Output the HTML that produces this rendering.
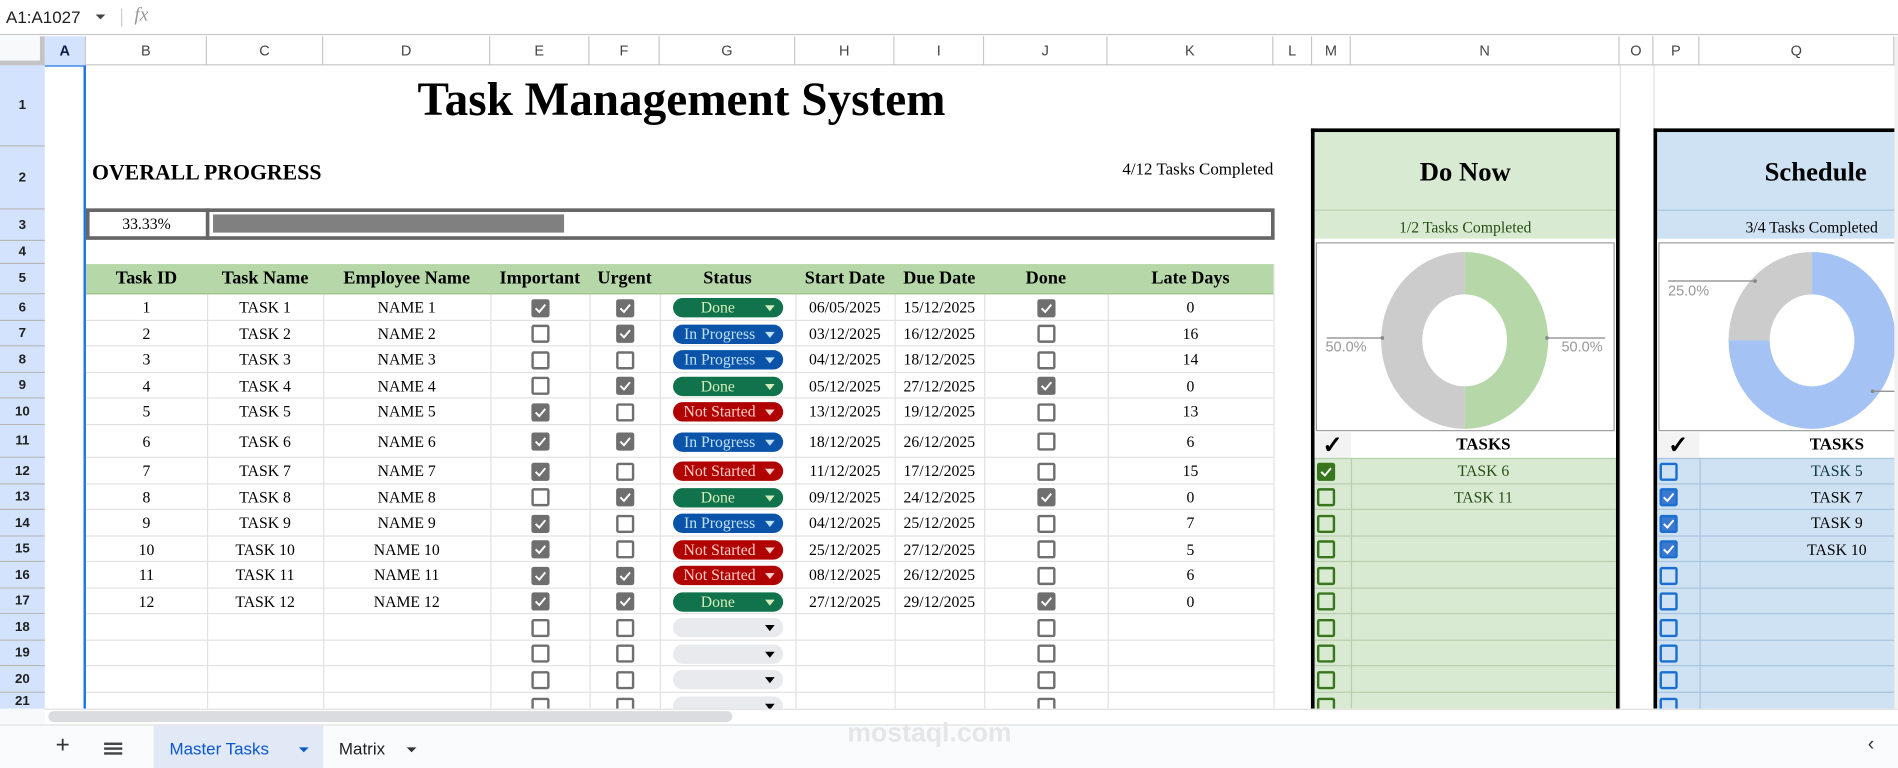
<!DOCTYPE html>
<html><head><meta charset="utf-8">
<style>
html,body{margin:0;padding:0;width:1898px;height:768px;overflow:hidden;background:#fff}
#w{position:absolute;left:0;top:0;width:1568px;height:634px;transform:scale(1.21046,1.21136);transform-origin:0 0;overflow:hidden;font-family:"Liberation Serif",serif;color:#000}
.a{position:absolute}
.hl{position:absolute;height:1px;background:#e2e2e2}
.vl{position:absolute;width:1px;background:#e2e2e2}
.r{position:absolute;left:0;width:1568px}
.c{position:absolute;top:0;bottom:0;display:flex;align-items:center;justify-content:center;font-size:13px;white-space:nowrap}
.B{left:71px;width:100px}.C{left:171px;width:96px}.D{left:267px;width:138px}.E{left:405px;width:82px}.F{left:487px;width:58px}.G{left:545px;width:112px}.H{left:657px;width:82px}.I{left:739px;width:74px}.J{left:813px;width:102px}.K{left:915px;width:137px}
.M{left:1086px;width:30px}.N{left:1116px;width:219px}.P{left:1369px;width:35px}.Q{left:1404px;width:161px}
.cb{width:15px;height:15px;box-sizing:border-box;border:2px solid #6f6f6f;border-radius:2px;display:block;position:relative}
.cb svg{position:absolute;left:-2px;top:-2px;width:15px;height:15px}
.k{background:#6f6f6f}
.g{border-color:#38761d}.gk{background:#38761d;border-color:#38761d}
.bl{border-color:#1a6fd0}.bk{background:#3b78d0;border-color:#1a6fd0}
.ch{width:91px;height:16px;border-radius:8px;color:#fff;font-size:13px;position:relative;display:flex;align-items:center;justify-content:center;padding-right:14px;box-sizing:border-box}
.ch:after{content:"";position:absolute;right:7px;top:6px;border-left:4px solid transparent;border-right:4px solid transparent;border-top:5px solid #fff}
.dn{background:#11734b;color:#d4edbc}.dn:after{border-top-color:#d4edbc}
.ip{background:#0a53a8;color:#bfe1f6}.ip:after{border-top-color:#bfe1f6}
.ns{background:#b10202;color:#ffcfc9}.ns:after{border-top-color:#ffcfc9}
.em{background:#e8eaed}.em:after{border-top-color:#000}
.ch.dn{padding-right:16px}
.ch.ns,.ch.ip{padding-right:13px}
.colh{position:absolute;top:30px;height:24px;display:flex;align-items:center;justify-content:center;font:12px "Liberation Sans",sans-serif;color:#444;border-right:1px solid #c7c7c7;box-sizing:border-box}
.rowh{position:absolute;left:0;width:37px;display:flex;align-items:center;justify-content:center;font:bold 11px "Liberation Sans",sans-serif;color:#1f1f1f;background:#d3e3fd;border-bottom:1px solid #b7b7b7;box-sizing:border-box}
</style></head><body><div id="w">

<!-- formula bar -->
<div class="a" style="left:0;top:0;width:1568px;height:29px;border-bottom:1px solid #c7c7c7;box-sizing:border-box"></div>
<div class="a" style="left:5px;top:6px;font:14px 'Liberation Sans',sans-serif;color:#1f1f1f">A1:A1027</div>
<div class="a" style="left:79px;top:12px;border-left:4px solid transparent;border-right:4px solid transparent;border-top:4px solid #444"></div>
<div class="a" style="left:100px;top:7px;width:1px;height:15px;background:#ccc"></div>
<div class="a" style="left:111px;top:4px;font:italic 16px 'Liberation Serif',serif;color:#999">fx</div>

<!-- column header -->
<div class="a" style="left:0;top:30px;width:37px;height:24px;background:#f8f9fa;border-right:4px solid #c4c4c4;border-bottom:4px solid #c4c4c4;box-sizing:border-box"></div>
<div class="a" style="left:37px;top:53px;width:1531px;height:1px;background:#c7c7c7"></div>
<div class="colh" style="left:37px;width:34px;background:#d3e3fd;color:#0b1d4f;font-weight:bold">A</div>
<div class="colh" style="left:71px;width:100px">B</div>
<div class="colh" style="left:171px;width:96px">C</div>
<div class="colh" style="left:267px;width:138px">D</div>
<div class="colh" style="left:405px;width:82px">E</div>
<div class="colh" style="left:487px;width:58px">F</div>
<div class="colh" style="left:545px;width:112px">G</div>
<div class="colh" style="left:657px;width:82px">H</div>
<div class="colh" style="left:739px;width:74px">I</div>
<div class="colh" style="left:813px;width:102px">J</div>
<div class="colh" style="left:915px;width:137px">K</div>
<div class="colh" style="left:1052px;width:32px">L</div>
<div class="colh" style="left:1084px;width:32px">M</div>
<div class="colh" style="left:1116px;width:222px">N</div>
<div class="colh" style="left:1338px;width:28px">O</div>
<div class="colh" style="left:1366px;width:38px">P</div>
<div class="colh" style="left:1404px;width:161px">Q</div>

<!-- row headers -->
<div class="rowh" style="top:54px;height:67px">1</div>
<div class="rowh" style="top:121px;height:52px">2</div>
<div class="rowh" style="top:173px;height:26px">3</div>
<div class="rowh" style="top:199px;height:19px">4</div>
<div class="rowh" style="top:218px;height:25px">5</div>
<div class="rowh" style="top:243px;height:22px">6</div>
<div class="rowh" style="top:265px;height:21px">7</div>
<div class="rowh" style="top:286px;height:22px">8</div>
<div class="rowh" style="top:308px;height:21px">9</div>
<div class="rowh" style="top:329px;height:22px">10</div>
<div class="rowh" style="top:351px;height:27px">11</div>
<div class="rowh" style="top:378px;height:22px">12</div>
<div class="rowh" style="top:400px;height:21px">13</div>
<div class="rowh" style="top:421px;height:22px">14</div>
<div class="rowh" style="top:443px;height:21px">15</div>
<div class="rowh" style="top:464px;height:22px">16</div>
<div class="rowh" style="top:486px;height:21px">17</div>
<div class="rowh" style="top:507px;height:22px">18</div>
<div class="rowh" style="top:529px;height:21px">19</div>
<div class="rowh" style="top:550px;height:22px">20</div>
<div class="rowh" style="top:572px;height:14px">21</div>
<div class="a" style="left:69px;top:54px;width:2px;height:531px;background:#1a73e8"></div>
<div class="a" style="left:37px;top:54px;width:34px;height:1px;background:#1a73e8"></div>

<!-- grid lines main table -->
<div class="hl" style="left:71px;top:264px;width:981px"></div>
<div class="hl" style="left:71px;top:285px;width:981px"></div>
<div class="hl" style="left:71px;top:307px;width:981px"></div>
<div class="hl" style="left:71px;top:328px;width:981px"></div>
<div class="hl" style="left:71px;top:350px;width:981px"></div>
<div class="hl" style="left:71px;top:377px;width:981px"></div>
<div class="hl" style="left:71px;top:399px;width:981px"></div>
<div class="hl" style="left:71px;top:420px;width:981px"></div>
<div class="hl" style="left:71px;top:442px;width:981px"></div>
<div class="hl" style="left:71px;top:463px;width:981px"></div>
<div class="hl" style="left:71px;top:485px;width:981px"></div>
<div class="hl" style="left:71px;top:506px;width:981px"></div>
<div class="hl" style="left:71px;top:528px;width:981px"></div>
<div class="hl" style="left:71px;top:549px;width:981px"></div>
<div class="hl" style="left:71px;top:571px;width:981px"></div>
<div class="vl" style="left:171px;top:218px;height:367px"></div>
<div class="vl" style="left:267px;top:218px;height:367px"></div>
<div class="vl" style="left:405px;top:218px;height:367px"></div>
<div class="vl" style="left:487px;top:218px;height:367px"></div>
<div class="vl" style="left:545px;top:218px;height:367px"></div>
<div class="vl" style="left:657px;top:218px;height:367px"></div>
<div class="vl" style="left:739px;top:218px;height:367px"></div>
<div class="vl" style="left:813px;top:218px;height:367px"></div>
<div class="vl" style="left:915px;top:218px;height:367px"></div>
<div class="vl" style="left:1052px;top:218px;height:367px"></div>
<div class="vl" style="left:1338px;top:54px;height:531px"></div>
<div class="vl" style="left:1366px;top:54px;height:52px"></div>

<!-- title -->
<div class="a" style="left:280px;top:60px;width:566px;text-align:center;font-weight:bold;font-size:39px">Task Management System</div>
<div class="a" style="left:76px;top:132px;font-weight:bold;font-size:18px">OVERALL PROGRESS</div>
<div class="a" style="left:852px;top:133px;width:200px;text-align:right;font-size:14px">4/12 Tasks Completed</div>

<!-- progress -->
<div class="a" style="left:71px;top:172px;width:982px;height:26px;border:3px solid #666;box-sizing:border-box"></div>
<div class="a" style="left:170px;top:172px;width:3px;height:26px;background:#666"></div>
<div class="a" style="left:71px;top:175px;width:100px;height:20px;display:flex;align-items:center;justify-content:center;font-size:13px">33.33%</div>
<div class="a" style="left:176px;top:177px;width:290px;height:15px;background:#808080"></div>

<!-- header row 5 -->
<div class="r" style="top:218px;height:25px">
<div class="a" style="left:71px;top:0;width:981px;height:25px;background:#b6d7a8;border-bottom:1px solid #9cc38b;box-sizing:border-box"></div>
<div class="c B" style="font-weight:bold;font-size:15px">Task ID</div><div class="c C" style="font-weight:bold;font-size:15px">Task Name</div><div class="c D" style="font-weight:bold;font-size:15px">Employee Name</div><div class="c E" style="font-weight:bold;font-size:15px">Important</div><div class="c F" style="font-weight:bold;font-size:15px">Urgent</div><div class="c G" style="font-weight:bold;font-size:15px">Status</div><div class="c H" style="font-weight:bold;font-size:15px">Start Date</div><div class="c I" style="font-weight:bold;font-size:15px">Due Date</div><div class="c J" style="font-weight:bold;font-size:15px">Done</div><div class="c K" style="font-weight:bold;font-size:15px">Late Days</div>
</div>

<!-- data rows -->
<div class="r" style="top:243px;height:22px"><div class="c B">1</div><div class="c C">TASK 1</div><div class="c D">NAME 1</div><div class="c E"><i class="cb k"><svg viewBox="0 0 15 15"><path d="M3.5 7.5l3 3 5-6" stroke="#fff" stroke-width="1.6" fill="none"/></svg></i></div><div class="c F"><i class="cb k"><svg viewBox="0 0 15 15"><path d="M3.5 7.5l3 3 5-6" stroke="#fff" stroke-width="1.6" fill="none"/></svg></i></div><div class="c G"><b class="ch dn" style="font-weight:normal">Done</b></div><div class="c H">06/05/2025</div><div class="c I">15/12/2025</div><div class="c J"><i class="cb k"><svg viewBox="0 0 15 15"><path d="M3.5 7.5l3 3 5-6" stroke="#fff" stroke-width="1.6" fill="none"/></svg></i></div><div class="c K">0</div></div>

<div class="r" style="top:265px;height:21px"><div class="c B">2</div><div class="c C">TASK 2</div><div class="c D">NAME 2</div><div class="c E"><i class="cb"></i></div><div class="c F"><i class="cb k"><svg viewBox="0 0 15 15"><path d="M3.5 7.5l3 3 5-6" stroke="#fff" stroke-width="1.6" fill="none"/></svg></i></div><div class="c G"><b class="ch ip" style="font-weight:normal">In Progress</b></div><div class="c H">03/12/2025</div><div class="c I">16/12/2025</div><div class="c J"><i class="cb"></i></div><div class="c K">16</div></div>

<div class="r" style="top:286px;height:22px"><div class="c B">3</div><div class="c C">TASK 3</div><div class="c D">NAME 3</div><div class="c E"><i class="cb"></i></div><div class="c F"><i class="cb"></i></div><div class="c G"><b class="ch ip" style="font-weight:normal">In Progress</b></div><div class="c H">04/12/2025</div><div class="c I">18/12/2025</div><div class="c J"><i class="cb"></i></div><div class="c K">14</div></div>

<div class="r" style="top:308px;height:21px"><div class="c B">4</div><div class="c C">TASK 4</div><div class="c D">NAME 4</div><div class="c E"><i class="cb"></i></div><div class="c F"><i class="cb k"><svg viewBox="0 0 15 15"><path d="M3.5 7.5l3 3 5-6" stroke="#fff" stroke-width="1.6" fill="none"/></svg></i></div><div class="c G"><b class="ch dn" style="font-weight:normal">Done</b></div><div class="c H">05/12/2025</div><div class="c I">27/12/2025</div><div class="c J"><i class="cb k"><svg viewBox="0 0 15 15"><path d="M3.5 7.5l3 3 5-6" stroke="#fff" stroke-width="1.6" fill="none"/></svg></i></div><div class="c K">0</div></div>

<div class="r" style="top:329px;height:22px"><div class="c B">5</div><div class="c C">TASK 5</div><div class="c D">NAME 5</div><div class="c E"><i class="cb k"><svg viewBox="0 0 15 15"><path d="M3.5 7.5l3 3 5-6" stroke="#fff" stroke-width="1.6" fill="none"/></svg></i></div><div class="c F"><i class="cb"></i></div><div class="c G"><b class="ch ns" style="font-weight:normal">Not Started</b></div><div class="c H">13/12/2025</div><div class="c I">19/12/2025</div><div class="c J"><i class="cb"></i></div><div class="c K">13</div></div>

<div class="r" style="top:351px;height:27px"><div class="c B">6</div><div class="c C">TASK 6</div><div class="c D">NAME 6</div><div class="c E"><i class="cb k"><svg viewBox="0 0 15 15"><path d="M3.5 7.5l3 3 5-6" stroke="#fff" stroke-width="1.6" fill="none"/></svg></i></div><div class="c F"><i class="cb k"><svg viewBox="0 0 15 15"><path d="M3.5 7.5l3 3 5-6" stroke="#fff" stroke-width="1.6" fill="none"/></svg></i></div><div class="c G"><b class="ch ip" style="font-weight:normal">In Progress</b></div><div class="c H">18/12/2025</div><div class="c I">26/12/2025</div><div class="c J"><i class="cb"></i></div><div class="c K">6</div></div>

<div class="r" style="top:378px;height:22px"><div class="c B">7</div><div class="c C">TASK 7</div><div class="c D">NAME 7</div><div class="c E"><i class="cb k"><svg viewBox="0 0 15 15"><path d="M3.5 7.5l3 3 5-6" stroke="#fff" stroke-width="1.6" fill="none"/></svg></i></div><div class="c F"><i class="cb"></i></div><div class="c G"><b class="ch ns" style="font-weight:normal">Not Started</b></div><div class="c H">11/12/2025</div><div class="c I">17/12/2025</div><div class="c J"><i class="cb"></i></div><div class="c K">15</div></div>

<div class="r" style="top:400px;height:21px"><div class="c B">8</div><div class="c C">TASK 8</div><div class="c D">NAME 8</div><div class="c E"><i class="cb"></i></div><div class="c F"><i class="cb k"><svg viewBox="0 0 15 15"><path d="M3.5 7.5l3 3 5-6" stroke="#fff" stroke-width="1.6" fill="none"/></svg></i></div><div class="c G"><b class="ch dn" style="font-weight:normal">Done</b></div><div class="c H">09/12/2025</div><div class="c I">24/12/2025</div><div class="c J"><i class="cb k"><svg viewBox="0 0 15 15"><path d="M3.5 7.5l3 3 5-6" stroke="#fff" stroke-width="1.6" fill="none"/></svg></i></div><div class="c K">0</div></div>

<div class="r" style="top:421px;height:22px"><div class="c B">9</div><div class="c C">TASK 9</div><div class="c D">NAME 9</div><div class="c E"><i class="cb k"><svg viewBox="0 0 15 15"><path d="M3.5 7.5l3 3 5-6" stroke="#fff" stroke-width="1.6" fill="none"/></svg></i></div><div class="c F"><i class="cb"></i></div><div class="c G"><b class="ch ip" style="font-weight:normal">In Progress</b></div><div class="c H">04/12/2025</div><div class="c I">25/12/2025</div><div class="c J"><i class="cb"></i></div><div class="c K">7</div></div>

<div class="r" style="top:443px;height:21px"><div class="c B">10</div><div class="c C">TASK 10</div><div class="c D">NAME 10</div><div class="c E"><i class="cb k"><svg viewBox="0 0 15 15"><path d="M3.5 7.5l3 3 5-6" stroke="#fff" stroke-width="1.6" fill="none"/></svg></i></div><div class="c F"><i class="cb"></i></div><div class="c G"><b class="ch ns" style="font-weight:normal">Not Started</b></div><div class="c H">25/12/2025</div><div class="c I">27/12/2025</div><div class="c J"><i class="cb"></i></div><div class="c K">5</div></div>

<div class="r" style="top:464px;height:22px"><div class="c B">11</div><div class="c C">TASK 11</div><div class="c D">NAME 11</div><div class="c E"><i class="cb k"><svg viewBox="0 0 15 15"><path d="M3.5 7.5l3 3 5-6" stroke="#fff" stroke-width="1.6" fill="none"/></svg></i></div><div class="c F"><i class="cb k"><svg viewBox="0 0 15 15"><path d="M3.5 7.5l3 3 5-6" stroke="#fff" stroke-width="1.6" fill="none"/></svg></i></div><div class="c G"><b class="ch ns" style="font-weight:normal">Not Started</b></div><div class="c H">08/12/2025</div><div class="c I">26/12/2025</div><div class="c J"><i class="cb"></i></div><div class="c K">6</div></div>

<div class="r" style="top:486px;height:21px"><div class="c B">12</div><div class="c C">TASK 12</div><div class="c D">NAME 12</div><div class="c E"><i class="cb k"><svg viewBox="0 0 15 15"><path d="M3.5 7.5l3 3 5-6" stroke="#fff" stroke-width="1.6" fill="none"/></svg></i></div><div class="c F"><i class="cb k"><svg viewBox="0 0 15 15"><path d="M3.5 7.5l3 3 5-6" stroke="#fff" stroke-width="1.6" fill="none"/></svg></i></div><div class="c G"><b class="ch dn" style="font-weight:normal">Done</b></div><div class="c H">27/12/2025</div><div class="c I">29/12/2025</div><div class="c J"><i class="cb k"><svg viewBox="0 0 15 15"><path d="M3.5 7.5l3 3 5-6" stroke="#fff" stroke-width="1.6" fill="none"/></svg></i></div><div class="c K">0</div></div>

<div class="r" style="top:507px;height:22px"><div class="c E"><i class="cb"></i></div><div class="c F"><i class="cb"></i></div><div class="c G"><b class="ch em"></b></div><div class="c J"><i class="cb"></i></div></div>
<div class="r" style="top:529px;height:21px"><div class="c E"><i class="cb"></i></div><div class="c F"><i class="cb"></i></div><div class="c G"><b class="ch em"></b></div><div class="c J"><i class="cb"></i></div></div>
<div class="r" style="top:550px;height:22px"><div class="c E"><i class="cb"></i></div><div class="c F"><i class="cb"></i></div><div class="c G"><b class="ch em"></b></div><div class="c J"><i class="cb"></i></div></div>
<div class="r" style="top:572px;height:22px"><div class="c E"><i class="cb"></i></div><div class="c F"><i class="cb"></i></div><div class="c G"><b class="ch em"></b></div><div class="c J"><i class="cb"></i></div></div>

<!-- DO NOW panel -->
<div class="a" style="left:1083px;top:106px;width:255px;height:480px;background:#d9ead3;border:3px solid #000;border-bottom:none;box-sizing:border-box"></div>
<div class="a" style="left:1086px;top:129px;width:249px;text-align:center;font-weight:bold;font-size:22px">Do Now</div>
<div class="a" style="left:1086px;top:173px;width:249px;height:1px;background:#b7cfae"></div>
<div class="a" style="left:1086px;top:180px;width:249px;text-align:center;font-size:13px;color:#274e13">1/2 Tasks Completed</div>
<div class="a" style="left:1086px;top:197px;width:249px;height:160px;background:#fff"></div>
<div class="a" style="left:1087px;top:200px;width:247px;height:156px;border:1px solid #9e9e9e;box-sizing:border-box"></div>
<div class="a" style="left:1086px;top:357px;width:30px;height:21px;background:#f3f3f3;display:flex;align-items:center;justify-content:center;font-size:20px;font-weight:bold">✓</div>
<div class="a" style="left:1116px;top:357px;width:219px;height:21px;background:#fff;display:flex;align-items:center;justify-content:center;font-size:14px;font-weight:bold">TASKS</div>
<div class="a" style="left:1086px;top:378px;width:249px;height:1px;background:#b7cfae"></div>
<div class="a" style="left:1086px;top:399px;width:249px;height:1px;background:#b7cfae"></div>
<div class="a" style="left:1086px;top:420px;width:249px;height:1px;background:#b7cfae"></div>
<div class="a" style="left:1086px;top:442px;width:249px;height:1px;background:#b7cfae"></div>
<div class="a" style="left:1086px;top:463px;width:249px;height:1px;background:#b7cfae"></div>
<div class="a" style="left:1086px;top:485px;width:249px;height:1px;background:#b7cfae"></div>
<div class="a" style="left:1086px;top:506px;width:249px;height:1px;background:#b7cfae"></div>
<div class="a" style="left:1086px;top:528px;width:249px;height:1px;background:#b7cfae"></div>
<div class="a" style="left:1086px;top:549px;width:249px;height:1px;background:#b7cfae"></div>
<div class="a" style="left:1086px;top:571px;width:249px;height:1px;background:#b7cfae"></div>
<div class="a" style="left:1116px;top:378px;width:1px;height:207px;background:#b7cfae"></div>

<div class="r" style="top:378px;height:22px"><div class="c M" style="justify-content:flex-start;padding-left:2px"><i class="cb gk"><svg viewBox="0 0 15 15"><path d="M3.5 7.5l3 3 5-6" stroke="#fff" stroke-width="1.6" fill="none"/></svg></i></div><div class="c N" style="color:#274e13">TASK 6</div></div>
<div class="r" style="top:400px;height:21px"><div class="c M" style="justify-content:flex-start;padding-left:2px"><i class="cb g"></i></div><div class="c N" style="color:#274e13">TASK 11</div></div>
<div class="r" style="top:421px;height:22px"><div class="c M" style="justify-content:flex-start;padding-left:2px"><i class="cb g"></i></div></div>
<div class="r" style="top:443px;height:21px"><div class="c M" style="justify-content:flex-start;padding-left:2px"><i class="cb g"></i></div></div>
<div class="r" style="top:464px;height:22px"><div class="c M" style="justify-content:flex-start;padding-left:2px"><i class="cb g"></i></div></div>
<div class="r" style="top:486px;height:21px"><div class="c M" style="justify-content:flex-start;padding-left:2px"><i class="cb g"></i></div></div>
<div class="r" style="top:507px;height:22px"><div class="c M" style="justify-content:flex-start;padding-left:2px"><i class="cb g"></i></div></div>
<div class="r" style="top:529px;height:21px"><div class="c M" style="justify-content:flex-start;padding-left:2px"><i class="cb g"></i></div></div>
<div class="r" style="top:550px;height:22px"><div class="c M" style="justify-content:flex-start;padding-left:2px"><i class="cb g"></i></div></div>
<div class="r" style="top:572px;height:22px"><div class="c M" style="justify-content:flex-start;padding-left:2px"><i class="cb g"></i></div></div>

<!-- SCHEDULE panel -->
<div class="a" style="left:1366px;top:106px;width:220px;height:480px;background:#cfe2f3;border-top:3px solid #000;border-left:3px solid #000;box-sizing:border-box"></div>
<div class="a" style="left:1400px;top:129px;width:200px;text-align:center;font-weight:bold;font-size:22px">Schedule</div>
<div class="a" style="left:1369px;top:173px;width:200px;height:1px;background:#a9c4de"></div>
<div class="a" style="left:1442px;top:180px;font-size:13px;white-space:nowrap">3/4 Tasks Completed</div>
<div class="a" style="left:1369px;top:197px;width:200px;height:160px;background:#fff"></div>
<div class="a" style="left:1370px;top:200px;width:210px;height:156px;border:1px solid #9e9e9e;box-sizing:border-box"></div>
<div class="a" style="left:1369px;top:357px;width:35px;height:21px;background:#f3f3f3;display:flex;align-items:center;justify-content:center;font-size:20px;font-weight:bold">✓</div>
<div class="a" style="left:1404px;top:357px;width:161px;height:21px;background:#fff;display:flex;align-items:center;justify-content:center;font-size:14px;font-weight:bold;padding-left:66px;box-sizing:border-box">TASKS</div>
<div class="a" style="left:1369px;top:378px;width:200px;height:1px;background:#a9c4de"></div>
<div class="a" style="left:1369px;top:399px;width:200px;height:1px;background:#a9c4de"></div>
<div class="a" style="left:1369px;top:420px;width:200px;height:1px;background:#a9c4de"></div>
<div class="a" style="left:1369px;top:442px;width:200px;height:1px;background:#a9c4de"></div>
<div class="a" style="left:1369px;top:463px;width:200px;height:1px;background:#a9c4de"></div>
<div class="a" style="left:1369px;top:485px;width:200px;height:1px;background:#a9c4de"></div>
<div class="a" style="left:1369px;top:506px;width:200px;height:1px;background:#a9c4de"></div>
<div class="a" style="left:1369px;top:528px;width:200px;height:1px;background:#a9c4de"></div>
<div class="a" style="left:1369px;top:549px;width:200px;height:1px;background:#a9c4de"></div>
<div class="a" style="left:1369px;top:571px;width:200px;height:1px;background:#a9c4de"></div>
<div class="a" style="left:1404px;top:378px;width:1px;height:207px;background:#a9c4de"></div>

<div class="r" style="top:378px;height:22px"><div class="c P" style="justify-content:flex-start;padding-left:2px"><i class="cb bl"></i></div><div class="c Q" style="padding-left:66px;box-sizing:border-box;color:#0c343d">TASK 5</div></div>
<div class="r" style="top:400px;height:21px"><div class="c P" style="justify-content:flex-start;padding-left:2px"><i class="cb bk"><svg viewBox="0 0 15 15"><path d="M3.5 7.5l3 3 5-6" stroke="#fff" stroke-width="1.6" fill="none"/></svg></i></div><div class="c Q" style="padding-left:66px;box-sizing:border-box">TASK 7</div></div>
<div class="r" style="top:421px;height:22px"><div class="c P" style="justify-content:flex-start;padding-left:2px"><i class="cb bk"><svg viewBox="0 0 15 15"><path d="M3.5 7.5l3 3 5-6" stroke="#fff" stroke-width="1.6" fill="none"/></svg></i></div><div class="c Q" style="padding-left:66px;box-sizing:border-box">TASK 9</div></div>
<div class="r" style="top:443px;height:21px"><div class="c P" style="justify-content:flex-start;padding-left:2px"><i class="cb bk"><svg viewBox="0 0 15 15"><path d="M3.5 7.5l3 3 5-6" stroke="#fff" stroke-width="1.6" fill="none"/></svg></i></div><div class="c Q" style="padding-left:66px;box-sizing:border-box">TASK 10</div></div>
<div class="r" style="top:464px;height:22px"><div class="c P" style="justify-content:flex-start;padding-left:2px"><i class="cb bl"></i></div></div>
<div class="r" style="top:486px;height:21px"><div class="c P" style="justify-content:flex-start;padding-left:2px"><i class="cb bl"></i></div></div>
<div class="r" style="top:507px;height:22px"><div class="c P" style="justify-content:flex-start;padding-left:2px"><i class="cb bl"></i></div></div>
<div class="r" style="top:529px;height:21px"><div class="c P" style="justify-content:flex-start;padding-left:2px"><i class="cb bl"></i></div></div>
<div class="r" style="top:550px;height:22px"><div class="c P" style="justify-content:flex-start;padding-left:2px"><i class="cb bl"></i></div></div>
<div class="r" style="top:572px;height:22px"><div class="c P" style="justify-content:flex-start;padding-left:2px"><i class="cb bl"></i></div></div>

<!-- charts -->
<svg class="a" style="left:0;top:0" width="1568" height="634" viewBox="0 0 1568 634">
<path d="M1210,208 A69,73 0 0 0 1210,354 L1210,319 A35,38 0 0 1 1210,243 Z" fill="#cccccc"/>
<path d="M1210,208 A69,73 0 0 1 1210,354 L1210,319 A35,38 0 0 0 1210,243 Z" fill="#b6d7a8"/>
<line x1="1096" y1="279" x2="1142" y2="279" stroke="#888"/><circle cx="1142" cy="279" r="1.5" fill="#888"/>
<line x1="1278" y1="279" x2="1326" y2="279" stroke="#888"/><circle cx="1278" cy="279" r="1.5" fill="#888"/>
<text x="1095" y="290" font-family="Liberation Sans,sans-serif" font-size="12" fill="#999">50.0%</text>
<text x="1290" y="290" font-family="Liberation Sans,sans-serif" font-size="12" fill="#999">50.0%</text>
<path d="M1497,208 A69,73 0 0 0 1428,281 L1462,281 A35,38 0 0 1 1497,243 Z" fill="#cccccc"/>
<path d="M1497,208 A69,73 0 1 1 1428,281 L1462,281 A35,38 0 1 0 1497,243 Z" fill="#a4c2f4"/>
<line x1="1378" y1="232" x2="1450" y2="232" stroke="#888"/><circle cx="1450" cy="232" r="1.5" fill="#888"/>
<line x1="1547" y1="323" x2="1568" y2="323" stroke="#888"/><circle cx="1547" cy="323" r="1.5" fill="#888"/>
<text x="1378" y="244" font-family="Liberation Sans,sans-serif" font-size="12" fill="#999">25.0%</text>
</svg>

<!-- right scrollbar -->
<div class="a" style="left:1565px;top:30px;width:3px;height:556px;background:#f1f1f1"></div>

<!-- horizontal scrollbar -->
<div class="a" style="left:0;top:585px;width:1568px;height:13px;background:#fff;border-top:1px solid #e0e0e0;box-sizing:border-box"></div>
<div class="a" style="left:40px;top:587px;width:565px;height:9px;border-radius:5px;background:#dadce0"></div>
<div class="a" style="left:0;top:585px;width:37px;height:13px;background:#f8f9fa"></div>

<!-- tab bar -->
<div class="a" style="left:0;top:598px;width:1568px;height:36px;background:#f9fbfd;border-top:1px solid #e0e0e0;box-sizing:border-box"></div>
<div class="a" style="left:46px;top:604px;font:20px 'Liberation Sans',sans-serif;color:#333">+</div>
<div class="a" style="left:86px;top:613px;width:15px;height:2px;background:#444;box-shadow:0 4px 0 #444,0 8px 0 #444"></div>
<div class="a" style="left:127px;top:599px;width:140px;height:35px;background:#e1e9f7"></div>
<div class="a" style="left:140px;top:610px;font:14px 'Liberation Sans',sans-serif;color:#0b57d0;font-weight:500">Master Tasks</div>
<div class="a" style="left:247px;top:617px;border-left:4px solid transparent;border-right:4px solid transparent;border-top:4px solid #0b57d0"></div>
<div class="a" style="left:280px;top:610px;font:14px 'Liberation Sans',sans-serif;color:#1f1f1f">Matrix</div>
<div class="a" style="left:336px;top:617px;border-left:4px solid transparent;border-right:4px solid transparent;border-top:4px solid #333"></div>
<div class="a" style="left:1543px;top:606px;font:16px 'Liberation Sans',sans-serif;color:#333">‹</div>
<div class="a" style="left:700px;top:592px;font:bold 22px 'Liberation Sans',sans-serif;color:#e6e6e6">mostaql.com</div>
</div></body></html>
